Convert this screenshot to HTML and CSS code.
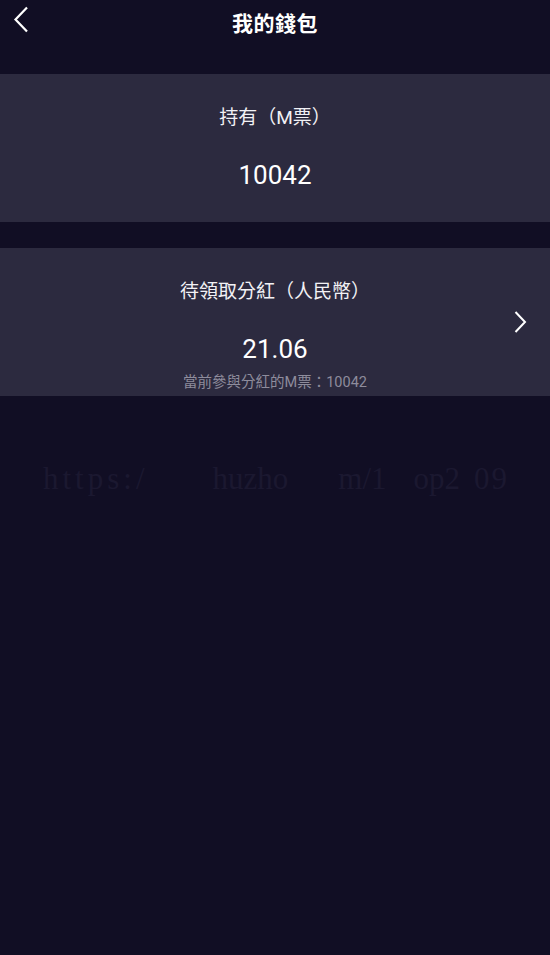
FILE: index.html
```html
<!DOCTYPE html>
<html lang="zh-Hant">
<head>
<meta charset="utf-8">
<title>我的錢包</title>
<link rel="stylesheet" href="styles.css">
</head>
<body>
<div class="page">
  <header class="topbar">
    <button class="back" aria-label="返回">
      <svg width="16" height="27" viewBox="0 0 16 27"><path d="M14 1.5 L2.5 13.5 L14 25.5" fill="none" stroke="#fff" stroke-width="2.2" stroke-linejoin="miter"/></svg>
    </button>
    <h1 class="title">我的錢包</h1>
  </header>

  <section class="card">
    <div class="label">持有（M票）</div>
    <div class="value">10042</div>
  </section>

  <section class="card card-link">
    <div class="label">待領取分紅（人民幣）</div>
    <div class="value">21.06</div>
    <div class="sub">當前參與分紅的M票：10042</div>
    <svg class="chev" width="13" height="22" viewBox="0 0 13 22"><path d="M1.5 1 L11 11 L1.5 21" fill="none" stroke="#fff" stroke-width="2"/></svg>
  </section>

  <div class="watermark"><span class="w1">https:/</span><span class="w2">huzho</span><span class="w3">m/1</span><span class="w4">op2</span><span class="w5">09</span></div>
</div>
</body>
</html>
```

FILE: styles.css
```css
html, body {
  margin: 0;
  padding: 0;
  background: #110e24;
}
.page {
  width: 550px;
  min-height: 955px;
  background: #110e24;
  font-family: Roboto, "Noto Sans CJK TC", "Noto Sans", sans-serif;
  color: #fff;
  display: flex;
  flex-direction: column;
}
.topbar {
  height: 74px;
  display: flex;
  justify-content: center;
  align-items: flex-start;
  position: relative;
}
.back {
  position: absolute;
  left: 13px;
  top: 6px;
  padding: 0;
  border: 0;
  background: none;
  line-height: 0;
}
.title {
  margin: 0;
  margin-top: 6px;
  font-size: 21px;
  line-height: 32px;
  font-weight: 700;
  font-family: "Noto Sans CJK TC", sans-serif;
  letter-spacing: 0.5px;
}
.card {
  height: 148px;
  box-sizing: border-box;
  background: #2c2a3f;
  padding-top: 30px;
  display: flex;
  flex-direction: column;
  align-items: center;
  position: relative;
}
.card + .card {
  margin-top: 26px;
}
.label {
  font-size: 19px;
  line-height: 28px;
  color: #f2f1f5;
}
.value {
  margin-top: 26px;
  font-size: 26px;
  line-height: 34px;
  color: #fff;
}
.sub {
  margin-top: 7px;
  font-size: 14.5px;
  line-height: 20px;
  color: #8e8c9c;
}
.chev {
  position: absolute;
  right: 23px;
  top: 63px;
}
.watermark {
  margin-top: 66px;
  padding-left: 43px;
  display: flex;
  align-items: baseline;
  font-family: "Liberation Serif", serif;
  font-size: 31px;
  line-height: 34px;
  color: #1b1830;
  white-space: nowrap;
}
.watermark .w1 { letter-spacing: 4px; }
.watermark .w2 { margin-left: 64px; }
.watermark .w3 { margin-left: 50px; }
.watermark .w4 { margin-left: 27px; }
.watermark .w5 { margin-left: 14px; letter-spacing: 2px; }
```
